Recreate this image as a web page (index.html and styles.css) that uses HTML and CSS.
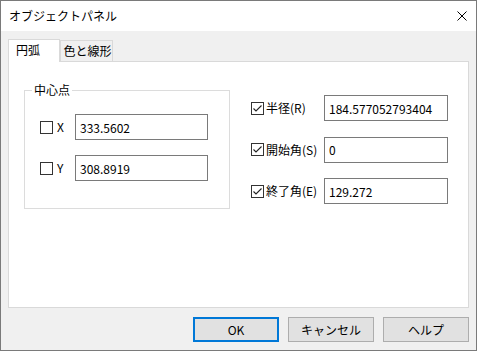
FILE: index.html
```html
<!DOCTYPE html>
<html lang="ja">
<head>
    <meta charset="UTF-8">
    <meta name="viewport" content="width=device-width, initial-scale=1.0">
    <title>オブジェクトパネル</title>
    <link rel="stylesheet" href="styles.css">
</head>
<body>
    <div class="dialog">
        <div class="titlebar">
            <span class="title">オブジェクトパネル</span>
            <span class="close">
                <svg width="10" height="10" viewBox="0 0 10 10"><path d="M0.5 0.5 L9.5 9.5 M9.5 0.5 L0.5 9.5" stroke="#000" stroke-width="1" fill="none"/></svg>
            </span>
        </div>
        <div class="content">
            <div class="tabs">
                <div class="tab active">円弧</div>
                <div class="tab">色と線形</div>
            </div>
            <div class="panel">
                <fieldset class="group">
                    <legend>中心点</legend>
                    <div class="group-body">
                        <div class="row">
                            <label class="check"><span class="box"></span>X</label>
                            <input type="text" class="field" value="333.5602">
                        </div>
                        <div class="row">
                            <label class="check"><span class="box"></span>Y</label>
                            <input type="text" class="field" value="308.8919">
                        </div>
                    </div>
                </fieldset>
                <div class="params">
                    <div class="row">
                        <label class="check wide"><span class="box checked"><svg width="11" height="11" viewBox="0 0 11 11"><path d="M1.5 5.5 L4 8 L9.5 2.5" stroke="#222" stroke-width="1.1" fill="none"/></svg></span>半径(R)</label>
                        <input type="text" class="field short" value="184.577052793404">
                    </div>
                    <div class="row">
                        <label class="check wide"><span class="box checked"><svg width="11" height="11" viewBox="0 0 11 11"><path d="M1.5 5.5 L4 8 L9.5 2.5" stroke="#222" stroke-width="1.1" fill="none"/></svg></span>開始角(S)</label>
                        <input type="text" class="field short" value="0">
                    </div>
                    <div class="row">
                        <label class="check wide"><span class="box checked"><svg width="11" height="11" viewBox="0 0 11 11"><path d="M1.5 5.5 L4 8 L9.5 2.5" stroke="#222" stroke-width="1.1" fill="none"/></svg></span>終了角(E)</label>
                        <input type="text" class="field short" value="129.272">
                    </div>
                </div>
            </div>
            <div class="buttons">
                <button class="btn default">OK</button>
                <button class="btn">キャンセル</button>
                <button class="btn">ヘルプ</button>
            </div>
        </div>
    </div>
</body>
</html>
```

FILE: styles.css
```css
*{
    margin: 0;
    padding: 0;
    box-sizing: border-box;
}
body{
    font-family: "Noto Sans CJK JP", sans-serif;
    font-size: 12px;
    color: #000;
    background-color: #ffffff;
}
.dialog{
    width: 477px;
    height: 351px;
    border: 1px solid #7a7a7a;
    background-color: #f0f0f0;
    display: flex;
    flex-direction: column;
}
.titlebar{
    height: 30px;
    background-color: #ffffff;
    display: flex;
    align-items: center;
    justify-content: space-between;
    padding-left: 8px;
    padding-right: 9px;
}
.title{
    line-height: 16px;
}
.close{
    display: flex;
    width: 10px;
    height: 10px;
}
.content{
    padding: 8px 7px 0 7px;
}
.tabs{
    display: flex;
    align-items: flex-end;
    height: 22px;
}
.tab{
    height: 21px;
    width: 53px;
    margin-left: -1px;
    border: 1px solid #d9d9d9;
    border-bottom: none;
    background-color: #f0f0f0;
    display: flex;
    align-items: center;
    justify-content: center;
    line-height: 16px;
    padding-left: 2px;
}
.tab.active{
    height: 23px;
    width: 52px;
    margin-left: 0;
    margin-bottom: -1px;
    background-color: #ffffff;
    position: relative;
    z-index: 1;
    justify-content: flex-start;
    padding-left: 7px;
    padding-bottom: 2px;
    margin-right: 1px;
}
.panel{
    height: 247px;
    border: 1px solid #d9d9d9;
    background-color: #ffffff;
    display: flex;
    align-items: flex-start;
    padding: 20px 0 0 15px;
}
.group{
    width: 206px;
    border: 1px solid #dcdcdc;
    padding: 0;
    margin: 0;
}
.group legend{
    margin-left: 7px;
    padding: 0 2px;
    line-height: 16px;
}
.group-body{
    padding: 16px 0 27px 15px;
    display: flex;
    flex-direction: column;
    gap: 15px;
}
.row{
    display: flex;
    align-items: center;
}
.check{
    width: 35px;
    display: flex;
    align-items: center;
    gap: 4px;
    line-height: 16px;
}
.check.wide{
    width: 73px;
    gap: 2px;
}
.box{
    width: 13px;
    height: 13px;
    border: 1px solid #333333;
    background-color: #ffffff;
    display: flex;
    flex-shrink: 0;
}
.field{
    width: 133px;
    height: 26px;
    border: 1px solid #7a7a7a;
    padding: 0 4px;
    font-family: "Noto Sans CJK JP", sans-serif;
    font-size: 12px;
    color: #000;
    background-color: #ffffff;
    outline: none;
}
.field.short{
    width: 124px;
}
.params{
    margin-left: 21px;
    margin-top: 13px;
    display: flex;
    flex-direction: column;
    gap: 15.5px;
}
.buttons{
    display: flex;
    justify-content: flex-end;
    gap: 9px;
    margin-top: 9px;
}
.btn{
    width: 86px;
    height: 25px;
    background-color: #e1e1e1;
    border: 1px solid #adadad;
    font-family: "Noto Sans CJK JP", sans-serif;
    font-size: 12px;
    color: #000;
}
.btn.default{
    border: 2px solid #0078d7;
}
```
